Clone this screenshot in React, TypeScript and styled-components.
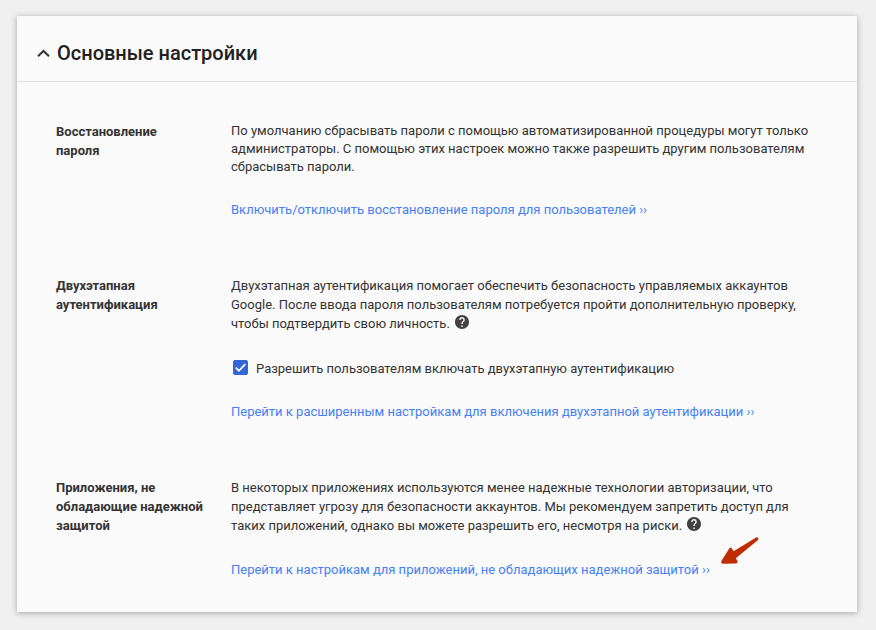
import React from 'react';
import styled, { createGlobalStyle } from 'styled-components';

const GlobalStyle = createGlobalStyle`
  * { box-sizing: border-box; }
  body {
    margin: 0;
    background: #f0f0f0;
    color: #333;
    font: 13px/19px Roboto, sans-serif;
  }
`;

const Card = styled.main`
  margin: 16px 19px 18px 17px;
  background: #fafafa;
  box-shadow: 0 1px 6px rgba(0, 0, 0, 0.32);
`;

const Header = styled.header`
  padding: 22px 20px 13px;
  border-bottom: 1px solid #e4e4e4;
`;

const Heading = styled.h1`
  margin: 0;
  font-size: 20px;
  font-weight: 500;
  line-height: 30px;
  color: #212121;
`;

const Toggle = styled.button`
  display: flex;
  align-items: center;
  gap: 7px;
  padding: 0;
  border: 0;
  background: none;
  font: inherit;
  color: inherit;
  cursor: pointer;
`;

const Sections = styled.div`
  display: flex;
  flex-direction: column;
  gap: 57px;
  padding: 40px 40px 33px 39px;
`;

const Section = styled.section`
  display: grid;
  grid-template-columns: 150px 1fr;
  column-gap: 25px;
`;

const SectionTitle = styled.h2`
  margin: 0;
  font-size: 13px;
  font-weight: 700;
  line-height: 19px;
`;

const Body = styled.div<{ $gap?: number }>`
  display: flex;
  flex-direction: column;
  align-items: flex-start;
  gap: ${(p) => p.$gap ?? 24}px;
`;

const Text = styled.p<{ $compact?: boolean }>`
  margin: 0;
  line-height: ${(p) => (p.$compact ? 18 : 19)}px;
`;

const Link = styled.a`
  color: #4580f5;
  text-decoration: none;
`;

const LinkRow = styled.div`
  display: flex;
  position: relative;
`;

const Pointer = styled.svg`
  position: absolute;
  left: 100%;
  bottom: 14px;
  margin-left: 10px;
`;

const HelpButton = styled.button`
  display: inline-flex;
  padding: 0;
  border: 0;
  margin-left: 2px;
  background: none;
  color: #424242;
  vertical-align: -1px;
  cursor: pointer;
`;

const CheckLabel = styled.label`
  display: flex;
  gap: 8px;
  padding: 2px 0 0 2px;
`;

const CheckBox = styled.span`
  display: grid;
  width: 15px;
  height: 15px;
  margin-top: 1px;

  & > * { grid-area: 1 / 1; }
  svg { pointer-events: none; visibility: hidden; }
  input:checked + svg { visibility: visible; }
`;

const CheckInput = styled.input`
  appearance: none;
  width: 15px;
  height: 15px;
  margin: 0;
  border: 1px solid #3367d6;
  border-radius: 2px;

  &:checked { background: #3367d6; }
`;

function Help() {
  return (
    <HelpButton type="button" aria-label="Справка">
      <svg width="14" height="14" viewBox="2 2 20 20" fill="currentColor" aria-hidden="true">
        <path d="M12 2C6.48 2 2 6.48 2 12s4.48 10 10 10 10-4.48 10-10S17.52 2 12 2zm1 17h-2v-2h2v2zm2.07-7.75-.9.92C13.45 12.9 13 13.5 13 15h-2v-.5c0-1.1.45-2.1 1.17-2.83l1.24-1.26c.37-.36.59-.86.59-1.41 0-1.1-.9-2-2-2s-2 .9-2 2H8c0-2.21 1.79-4 4-4s4 1.79 4 4c0 .88-.36 1.68-.93 2.25z" />
      </svg>
    </HelpButton>
  );
}

export default function App() {
  return (
    <>
      <GlobalStyle />
      <Card>
        <Header>
          <Heading>
            <Toggle type="button" aria-expanded="true">
              <svg width="13" height="9" viewBox="0 0 13 9" fill="none" aria-hidden="true">
                <path d="M1 7.2 6.5 2l5.5 5.2" stroke="#333" strokeWidth="2" />
              </svg>
              Основные настройки
            </Toggle>
          </Heading>
        </Header>
        <Sections>
          <Section>
            <SectionTitle>
              Восстановление
              <br />
              пароля
            </SectionTitle>
            <Body>
              <Text $compact>
                По умолчанию сбрасывать пароли с помощью автоматизированной процедуры могут только
                администраторы. С помощью этих настроек можно также разрешить другим пользователям
                сбрасывать пароли.
              </Text>
              <Link href="#recovery">Включить/отключить восстановление пароля для пользователей ››</Link>
            </Body>
          </Section>
          <Section>
            <SectionTitle>Двухэтапная аутентификация</SectionTitle>
            <Body>
              <Text>
                Двухэтапная аутентификация помогает обеспечить безопасность управляемых аккаунтов
                Google. После ввода пароля пользователям потребуется пройти дополнительную проверку,
                чтобы подтвердить свою личность. <Help />
              </Text>
              <CheckLabel>
                <CheckBox>
                  <CheckInput type="checkbox" defaultChecked />
                  <svg width="15" height="15" viewBox="0 0 15 15" fill="none" aria-hidden="true">
                    <path d="m2.8 7.7 3.1 3.1 6.4-6.7" stroke="#fff" strokeWidth="1.7" />
                  </svg>
                </CheckBox>
                Разрешить пользователям включать двухэтапную аутентификацию
              </CheckLabel>
              <Link href="#two-step">
                Перейти к расширенным настройкам для включения двухэтапной аутентификации ››
              </Link>
            </Body>
          </Section>
          <Section>
            <SectionTitle>Приложения, не обладающие надежной защитой</SectionTitle>
            <Body $gap={25}>
              <Text>
                В некоторых приложениях используются менее надежные технологии авторизации, что
                представляет угрозу для безопасности аккаунтов. Мы рекомендуем запретить доступ для
                таких приложений, однако вы можете разрешить его, несмотря на риски. <Help />
              </Text>
              <LinkRow>
                <Link href="#apps">
                  Перейти к настройкам для приложений, не обладающих надежной защитой ››
                </Link>
                <Pointer width="40" height="30" viewBox="0 0 40 30" aria-hidden="true">
                  <path
                    d="M36.5 2.2 13.6 16.2 11.6 13.1Q10.1 11.8 8.9 14L1.4 26Q.6 28.6 3.2 28.8L16 28.4Q18.4 27.8 17.2 25.6L15.8 23.2 38 5Q39.4 2.2 36.5 2.2Z"
                    fill="#bf2c00"
                  />
                </Pointer>
              </LinkRow>
            </Body>
          </Section>
        </Sections>
      </Card>
    </>
  );
}
